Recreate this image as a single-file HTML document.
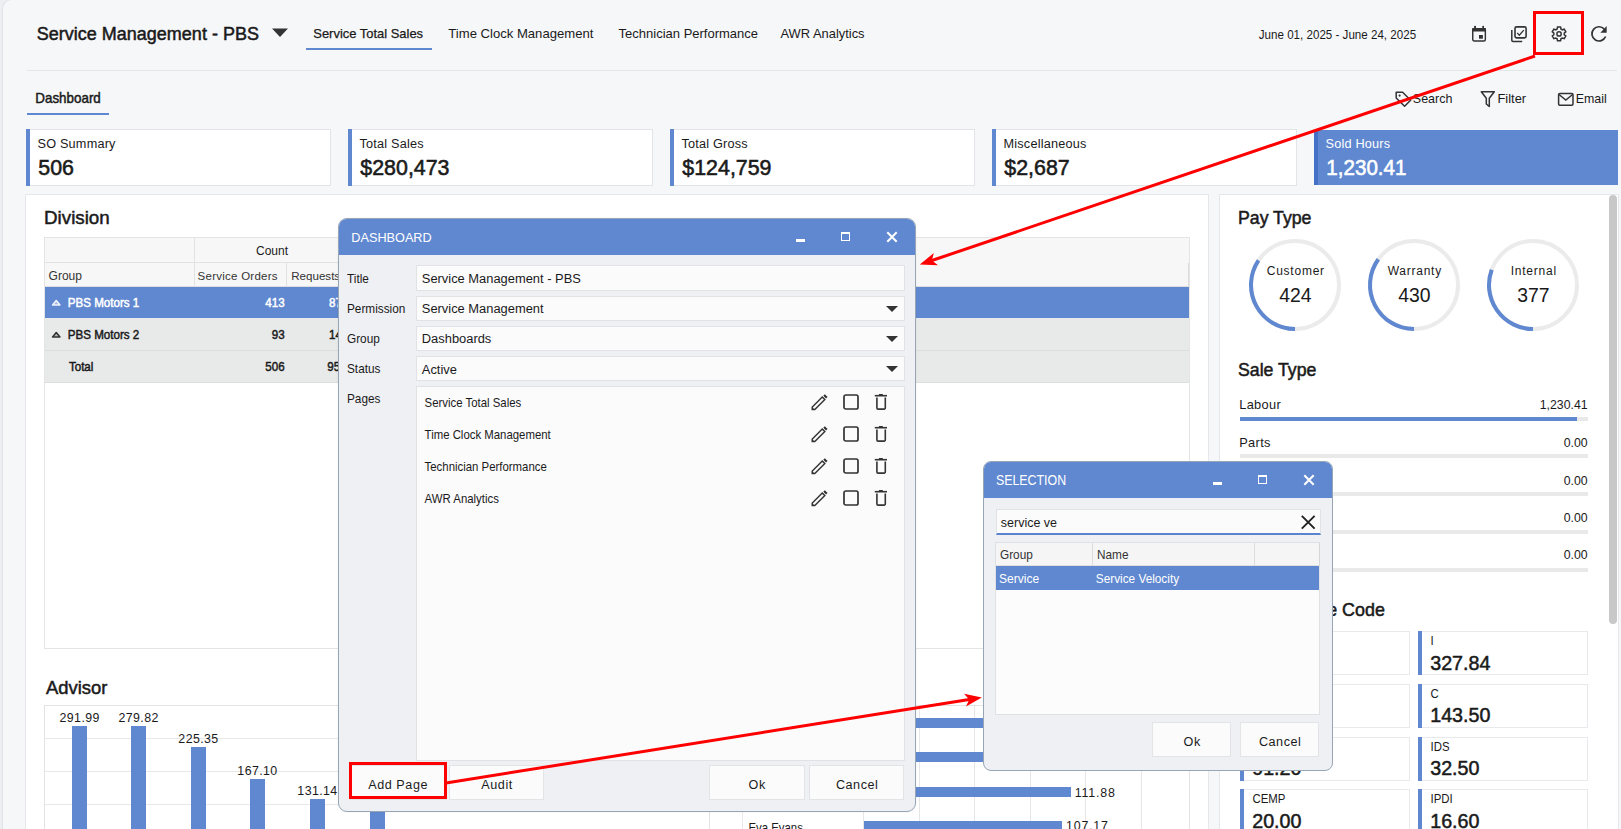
<!DOCTYPE html><html><head><meta charset="utf-8"><style>
html,body{margin:0;padding:0;width:1621px;height:829px;overflow:hidden;background:#f6f7f9}
body{position:relative;font-family:"Liberation Sans",sans-serif;color:#1a1a1a}
.r{position:absolute}
.t{position:absolute;white-space:nowrap;line-height:1}
svg.r{overflow:visible}
</style></head><body>
<div class="r" style="left:0.00px;top:0.00px;width:1621.00px;height:829.00px;background:#eceef1;"></div>
<div class="r" style="left:2.00px;top:-1.00px;width:1619.00px;height:830.00px;background:#f6f7f9;border-left:1px solid #dfe2e6;border-top:1px solid #e6e8eb;border-top-left-radius:10px;box-sizing:border-box;"></div>
<div class="t" style="left:36.80px;top:25px;font-size:18.0px;transform:scaleY(1.05);transform-origin:0 15px;-webkit-text-stroke:0.5px #1a1a1a;">Service Management - PBS</div>
<svg class="r" style="left:271px;top:28px" width="18" height="10"><polygon points="1,0.5 17,0.5 9,9" fill="#333"/></svg>
<div class="t" style="left:313.30px;top:28px;font-size:12.95px;-webkit-text-stroke:0.25px #1a1a1a;">Service Total Sales</div>
<div class="t" style="left:448.30px;top:27px;font-size:13.1px;">Time Clock Management</div>
<div class="t" style="left:618.60px;top:27px;font-size:13.0px;">Technician Performance</div>
<div class="t" style="left:780.50px;top:28px;font-size:12.9px;">AWR Analytics</div>
<div class="r" style="left:306.00px;top:48.00px;width:126.00px;height:2.00px;background:#6088d0;"></div>
<div class="r" style="left:27.00px;top:70.00px;width:1590.00px;height:1.00px;background:#e4e6e9;"></div>
<div class="t" style="left:1258.80px;top:29px;font-size:11.6px;transform:scaleY(1.06);transform-origin:0 10px;">June 01, 2025 - June 24, 2025</div>
<svg class="r" style="left:1471px;top:25px" width="17" height="18" viewBox="0 0 17 18">
<rect x="1.75" y="3.6" width="12.6" height="12.45" rx="1.5" fill="none" stroke="#333" stroke-width="1.45"/>
<rect x="1.1" y="2.9" width="13.9" height="3.7" rx="0.8" fill="#333"/>
<rect x="3.1" y="0.9" width="1.9" height="2.6" fill="#333"/><rect x="11.3" y="0.9" width="1.7" height="2.6" fill="#333"/>
<rect x="8.0" y="10.0" width="3.9" height="3.7" fill="#333"/></svg>
<svg class="r" style="left:1510px;top:25px" width="18" height="18" viewBox="0 0 18 18">
<rect x="5.0" y="1.9" width="11.1" height="11.0" rx="1.6" fill="none" stroke="#333" stroke-width="1.6"/>
<path d="M1.8 5.0 V15.3 a1.2 1.2 0 0 0 1.2 1.2 H12.2" fill="none" stroke="#333" stroke-width="1.5"/>
<path d="M7.2 7.9 L9.3 10.3 L13.8 5.1" fill="none" stroke="#333" stroke-width="1.3"/></svg>
<svg class="r" style="left:1546px;top:22px" width="26" height="24" viewBox="0 0 26 24">
<path d="M11.16 7.00 L11.50 4.97 L14.58 4.97 L14.92 7.00 L16.34 7.82 L18.27 7.10 L19.81 9.76 L18.23 11.08 L18.23 12.72 L19.81 14.04 L18.27 16.70 L16.34 15.98 L14.92 16.80 L14.58 18.83 L11.50 18.83 L11.16 16.80 L9.74 15.98 L7.81 16.70 L6.27 14.04 L7.85 12.72 L7.85 11.08 L6.27 9.76 L7.81 7.10 L9.74 7.82 Z" fill="none" stroke="#333" stroke-width="1.5" stroke-linejoin="miter"/>
<circle cx="13.04" cy="11.9" r="2.15" fill="none" stroke="#333" stroke-width="1.45"/></svg>
<svg class="r" style="left:1586px;top:22px" width="26" height="24" viewBox="0 0 26 24">
<path d="M19.61 14.53 A7.1 7.1 0 1 1 18.31 7.12" fill="none" stroke="#333" stroke-width="1.7"/>
<polygon points="20.7,4.05 20.7,10.86 14.33,10.86" fill="#333"/></svg>
<div class="t" style="left:35.30px;top:92px;font-size:13.4px;transform:scaleY(1.04);transform-origin:0 11px;-webkit-text-stroke:0.45px #1a1a1a;">Dashboard</div>
<div class="r" style="left:27.00px;top:113.00px;width:82.00px;height:2.00px;background:#6088d0;"></div>
<svg class="r" style="left:1394px;top:90px" width="19" height="18" viewBox="0 0 19 18">
<path d="M2.2 2.2 H8.6 L16.6 10.2 L10.6 16.2 L2.2 8 Z" fill="none" stroke="#333" stroke-width="1.5" stroke-linejoin="round"/>
<circle cx="5.6" cy="5.6" r="1.1" fill="#333"/></svg>
<div class="t" style="left:1412.80px;top:93px;font-size:12.5px;transform:scaleY(1.06);transform-origin:0 10px;">Search</div>
<svg class="r" style="left:1480px;top:90px" width="16" height="18" viewBox="0 0 16 18">
<path d="M1.3 1.8 H14.3 L9.3 8.3 V16.5 L6.3 14 V8.3 Z" fill="none" stroke="#333" stroke-width="1.5" stroke-linejoin="round"/></svg>
<div class="t" style="left:1497.50px;top:93px;font-size:12.9px;transform:scaleY(1.04);transform-origin:0 10px;">Filter</div>
<svg class="r" style="left:1557px;top:91.5px" width="18" height="15" viewBox="0 0 18 15">
<rect x="1.6" y="1.6" width="14.4" height="11.7" rx="1.2" fill="none" stroke="#333" stroke-width="1.5"/>
<path d="M2 2.5 L8.8 8 L15.6 2.5" fill="none" stroke="#333" stroke-width="1.5"/></svg>
<div class="t" style="left:1575.70px;top:93px;font-size:12.4px;transform:scaleY(1.08);transform-origin:0 10px;">Email</div>
<div class="r" style="left:26.00px;top:129.00px;width:305.00px;height:57.00px;background:#fff;border:1px solid #e2e4e8;box-sizing:border-box;"></div>
<div class="r" style="left:26.00px;top:129.00px;width:4.00px;height:57.00px;background:#6088d0;"></div>
<div class="t" style="left:37.50px;top:138px;font-size:12.7px;transform:scaleY(1.03);transform-origin:0 10px;letter-spacing:0.2px;">SO Summary</div>
<div class="t" style="left:38.30px;top:158px;font-size:21.4px;transform:scaleY(1.07);transform-origin:0 17px;-webkit-text-stroke:0.55px #1a1a1a;">506</div>
<div class="r" style="left:348.00px;top:129.00px;width:305.00px;height:57.00px;background:#fff;border:1px solid #e2e4e8;box-sizing:border-box;"></div>
<div class="r" style="left:348.00px;top:129.00px;width:4.00px;height:57.00px;background:#6088d0;"></div>
<div class="t" style="left:359.50px;top:138px;font-size:12.7px;transform:scaleY(1.03);transform-origin:0 10px;letter-spacing:0.2px;">Total Sales</div>
<div class="t" style="left:360.30px;top:158px;font-size:21.4px;transform:scaleY(1.07);transform-origin:0 17px;-webkit-text-stroke:0.55px #1a1a1a;">$280,473</div>
<div class="r" style="left:670.00px;top:129.00px;width:305.00px;height:57.00px;background:#fff;border:1px solid #e2e4e8;box-sizing:border-box;"></div>
<div class="r" style="left:670.00px;top:129.00px;width:4.00px;height:57.00px;background:#6088d0;"></div>
<div class="t" style="left:681.50px;top:138px;font-size:12.7px;transform:scaleY(1.03);transform-origin:0 10px;letter-spacing:0.2px;">Total Gross</div>
<div class="t" style="left:682.30px;top:158px;font-size:21.4px;transform:scaleY(1.07);transform-origin:0 17px;-webkit-text-stroke:0.55px #1a1a1a;">$124,759</div>
<div class="r" style="left:992.00px;top:129.00px;width:305.00px;height:57.00px;background:#fff;border:1px solid #e2e4e8;box-sizing:border-box;"></div>
<div class="r" style="left:992.00px;top:129.00px;width:4.00px;height:57.00px;background:#6088d0;"></div>
<div class="t" style="left:1003.50px;top:138px;font-size:12.7px;transform:scaleY(1.03);transform-origin:0 10px;letter-spacing:0.2px;">Miscellaneous</div>
<div class="t" style="left:1004.30px;top:158px;font-size:21.4px;transform:scaleY(1.07);transform-origin:0 17px;-webkit-text-stroke:0.55px #1a1a1a;">$2,687</div>
<div class="r" style="left:1314.00px;top:130.00px;width:304.00px;height:55.00px;background:#6088d0;"></div>
<div class="r" style="left:1314.00px;top:130.00px;width:4.00px;height:55.00px;background:#4470c6;"></div>
<div class="t" style="left:1325.50px;top:138px;font-size:12.7px;color:#fff;transform:scaleY(1.03);transform-origin:0 10px;letter-spacing:0.2px;">Sold Hours</div>
<div class="t" style="left:1326.30px;top:158px;font-size:20.6px;color:#fff;transform:scaleY(1.1);transform-origin:0 17px;-webkit-text-stroke:0.55px #fff;">1,230.41</div>
<div class="r" style="left:25.00px;top:194.00px;width:1184.00px;height:646.00px;background:#fff;border:1px solid #e5e7ea;box-sizing:border-box;"></div>
<div class="t" style="left:44.00px;top:209px;font-size:18.8px;transform:scaleY(1.01);transform-origin:0 15px;-webkit-text-stroke:0.5px #1a1a1a;">Division</div>
<div class="r" style="left:44.00px;top:237.00px;width:1146.00px;height:412.00px;background:#fff;border:1px solid #e4e4e4;box-sizing:border-box;"></div>
<div class="r" style="left:45.00px;top:238.00px;width:1144.00px;height:49.00px;background:#f7f7f7;"></div>
<div class="r" style="left:45.00px;top:262.00px;width:295.00px;height:1.00px;background:#e2e2e2;"></div>
<div class="r" style="left:45.00px;top:286.00px;width:1144.00px;height:1.00px;background:#dedede;"></div>
<div class="r" style="left:194.00px;top:238.00px;width:1.00px;height:49.00px;background:#e2e2e2;"></div>
<div class="r" style="left:286.00px;top:263.00px;width:1.00px;height:24.00px;background:#e2e2e2;"></div>
<div class="r" style="left:1188.00px;top:263.00px;width:1.00px;height:24.00px;background:#dcdcdc;"></div>
<div class="t" style="left:256.00px;top:245px;font-size:12.0px;">Count</div>
<div class="t" style="left:48.60px;top:270px;font-size:12.0px;color:#333;">Group</div>
<div class="t" style="left:197.60px;top:271px;font-size:11.5px;color:#333;letter-spacing:0.25px;">Service Orders</div>
<div class="t" style="left:291.20px;top:270px;font-size:11.6px;color:#333;">Requests</div>
<div class="r" style="left:45.00px;top:287.00px;width:1144.00px;height:31.00px;background:#6088d0;"></div>
<div class="r" style="left:45.00px;top:318.00px;width:1144.00px;height:64.00px;background:#e8e9e9;"></div>
<div class="r" style="left:45.00px;top:350.00px;width:1144.00px;height:1.00px;background:#dcdddd;"></div>
<div class="r" style="left:45.00px;top:382.00px;width:1144.00px;height:1.00px;background:#dedede;"></div>
<svg class="r" style="left:51px;top:299px" width="11" height="8"><polygon points="1.6,6 8.9,6 5.25,1.6" fill="#9fb6e3" stroke="#eef2fa" stroke-width="1.6" stroke-linejoin="round"/></svg>
<svg class="r" style="left:51px;top:331px" width="11" height="8"><polygon points="1.6,6 8.9,6 5.25,1.6" fill="#bbb" stroke="#333" stroke-width="1.6" stroke-linejoin="round"/></svg>
<div class="t" style="left:67.80px;top:297px;font-size:11.6px;color:#fff;transform:scaleY(1.1);transform-origin:0 10px;-webkit-text-stroke:0.45px #fff;">PBS Motors 1</div>
<div class="t" style="left:67.80px;top:329px;font-size:11.6px;transform:scaleY(1.1);transform-origin:0 10px;-webkit-text-stroke:0.45px #1a1a1a;">PBS Motors 2</div>
<div class="t" style="left:68.90px;top:361px;font-size:11.6px;transform:scaleY(1.1);transform-origin:0 10px;-webkit-text-stroke:0.45px #1a1a1a;">Total</div>
<div class="t" style="left:224.60px;width:60px;text-align:right;top:297px;font-size:11.6px;color:#fff;transform:scaleY(1.08);transform-origin:0 10px;-webkit-text-stroke:0.45px #fff;">413</div>
<div class="t" style="left:224.60px;width:60px;text-align:right;top:329px;font-size:11.6px;transform:scaleY(1.08);transform-origin:0 10px;-webkit-text-stroke:0.45px #1a1a1a;">93</div>
<div class="t" style="left:224.60px;width:60px;text-align:right;top:361px;font-size:11.6px;transform:scaleY(1.08);transform-origin:0 10px;-webkit-text-stroke:0.45px #1a1a1a;">506</div>
<div class="t" style="left:329.00px;top:297px;font-size:11.6px;color:#fff;transform:scaleY(1.08);transform-origin:0 10px;-webkit-text-stroke:0.45px #fff;">87</div>
<div class="t" style="left:329.00px;top:329px;font-size:11.6px;transform:scaleY(1.08);transform-origin:0 10px;-webkit-text-stroke:0.45px #1a1a1a;">14</div>
<div class="t" style="left:327.20px;top:361px;font-size:11.6px;transform:scaleY(1.08);transform-origin:0 10px;-webkit-text-stroke:0.45px #1a1a1a;">95</div>
<div class="t" style="left:46.00px;top:679px;font-size:18.4px;-webkit-text-stroke:0.5px #1a1a1a;">Advisor</div>
<div class="r" style="left:44.00px;top:705.00px;width:666.00px;height:1.00px;background:#e3e3e3;"></div>
<div class="r" style="left:44.00px;top:705.00px;width:1.00px;height:135.00px;background:#e3e3e3;"></div>
<div class="r" style="left:45.00px;top:738.00px;width:665.00px;height:1.00px;background:#e8e8e8;"></div>
<div class="r" style="left:45.00px;top:771.00px;width:665.00px;height:1.00px;background:#e8e8e8;"></div>
<div class="r" style="left:45.00px;top:804.00px;width:665.00px;height:1.00px;background:#e8e8e8;"></div>
<div class="r" style="left:72.00px;top:726.00px;width:15.00px;height:114.00px;background:#6088d0;"></div>
<div class="t" style="left:39.70px;width:80px;text-align:center;top:712px;font-size:12.4px;transform:scaleY(1.05);transform-origin:0 10px;letter-spacing:0.4px;">291.99</div>
<div class="r" style="left:131.00px;top:726.00px;width:15.00px;height:114.00px;background:#6088d0;"></div>
<div class="t" style="left:98.60px;width:80px;text-align:center;top:712px;font-size:12.4px;transform:scaleY(1.05);transform-origin:0 10px;letter-spacing:0.4px;">279.82</div>
<div class="r" style="left:191.00px;top:747.00px;width:15.00px;height:93.00px;background:#6088d0;"></div>
<div class="t" style="left:158.50px;width:80px;text-align:center;top:733px;font-size:12.4px;transform:scaleY(1.05);transform-origin:0 10px;letter-spacing:0.4px;">225.35</div>
<div class="r" style="left:250.00px;top:779.00px;width:15.00px;height:61.00px;background:#6088d0;"></div>
<div class="t" style="left:217.50px;width:80px;text-align:center;top:765px;font-size:12.4px;transform:scaleY(1.05);transform-origin:0 10px;letter-spacing:0.4px;">167.10</div>
<div class="r" style="left:310.00px;top:799.00px;width:15.00px;height:41.00px;background:#6088d0;"></div>
<div class="t" style="left:277.50px;width:80px;text-align:center;top:785px;font-size:12.4px;transform:scaleY(1.05);transform-origin:0 10px;letter-spacing:0.4px;">131.14</div>
<div class="r" style="left:370.00px;top:790.00px;width:15.00px;height:50.00px;background:#6088d0;"></div>
<div class="r" style="left:710.00px;top:705.00px;width:480.00px;height:1.00px;background:#e3e3e3;"></div>
<div class="r" style="left:709.00px;top:705.00px;width:1.00px;height:135.00px;background:#e3e3e3;"></div>
<div class="r" style="left:742.00px;top:705.00px;width:1.00px;height:135.00px;background:#e8e8e8;"></div>
<div class="r" style="left:863.00px;top:706.00px;width:1.00px;height:134.00px;background:#e6e6e6;"></div>
<div class="r" style="left:919.00px;top:706.00px;width:1.00px;height:134.00px;background:#e6e6e6;"></div>
<div class="r" style="left:974.00px;top:706.00px;width:1.00px;height:134.00px;background:#e6e6e6;"></div>
<div class="r" style="left:1030.00px;top:706.00px;width:1.00px;height:134.00px;background:#e6e6e6;"></div>
<div class="r" style="left:1085.00px;top:706.00px;width:1.00px;height:134.00px;background:#e6e6e6;"></div>
<div class="r" style="left:1141.00px;top:706.00px;width:1.00px;height:134.00px;background:#e6e6e6;"></div>
<div class="r" style="left:1189.00px;top:705.00px;width:1.00px;height:135.00px;background:#e3e3e3;"></div>
<div class="r" style="left:864.00px;top:718.00px;width:336.00px;height:10.00px;background:#6088d0;"></div>
<div class="r" style="left:864.00px;top:752.00px;width:336.00px;height:10.00px;background:#6088d0;"></div>
<div class="r" style="left:864.00px;top:787.00px;width:207.00px;height:10.00px;background:#6088d0;"></div>
<div class="t" style="left:1074.80px;top:787px;font-size:12.4px;transform:scaleY(1.05);transform-origin:0 10px;letter-spacing:0.8px;">111.88</div>
<div class="r" style="left:864.00px;top:821.00px;width:198.00px;height:9.00px;background:#6088d0;"></div>
<div class="t" style="left:1066.00px;top:820px;font-size:12.4px;transform:scaleY(1.05);transform-origin:0 10px;letter-spacing:0.8px;">107.17</div>
<div class="t" style="left:748.40px;top:823px;font-size:11.4px;transform:scaleY(1.12);transform-origin:0 9px;">Eva Evans</div>
<div class="r" style="left:1219.00px;top:194.00px;width:400.00px;height:646.00px;background:#fff;border:1px solid #e5e7ea;box-sizing:border-box;"></div>
<div class="r" style="left:1609.00px;top:195.00px;width:8.00px;height:429.00px;background:#c8c8c8;border-radius:4px;"></div>
<div class="t" style="left:1238.00px;top:210px;font-size:17.7px;transform:scaleY(1.03);transform-origin:0 14px;-webkit-text-stroke:0.5px #1a1a1a;">Pay Type</div>
<svg class="r" style="left:1245px;top:235px" width="100" height="100" viewBox="1245 235 100 100">
<circle cx="1295" cy="285" r="44" fill="none" stroke="#ebebeb" stroke-width="4"/>
<path d="M1295.00 329.00 A44 44 0 0 1 1258.52 260.40" fill="none" stroke="#6088d0" stroke-width="4"/></svg>
<div class="t" style="left:1250.80px;width:90px;text-align:center;top:265px;font-size:12.0px;letter-spacing:0.75px;">Customer</div>
<div class="t" style="left:1250.40px;width:90px;text-align:center;top:286px;font-size:19.4px;transform:scaleY(1.07);transform-origin:0 16px;">424</div>
<svg class="r" style="left:1364px;top:235px" width="100" height="100" viewBox="1364 235 100 100">
<circle cx="1414" cy="285" r="44" fill="none" stroke="#ebebeb" stroke-width="4"/>
<path d="M1414.00 329.00 A44 44 0 0 1 1378.29 259.29" fill="none" stroke="#6088d0" stroke-width="4"/></svg>
<div class="t" style="left:1369.80px;width:90px;text-align:center;top:265px;font-size:12.0px;letter-spacing:0.75px;">Warranty</div>
<div class="t" style="left:1369.40px;width:90px;text-align:center;top:286px;font-size:19.4px;transform:scaleY(1.07);transform-origin:0 16px;">430</div>
<svg class="r" style="left:1483px;top:235px" width="100" height="100" viewBox="1483 235 100 100">
<circle cx="1533" cy="285" r="44" fill="none" stroke="#ebebeb" stroke-width="4"/>
<path d="M1533.00 329.00 A44 44 0 0 1 1491.72 269.77" fill="none" stroke="#6088d0" stroke-width="4"/></svg>
<div class="t" style="left:1488.80px;width:90px;text-align:center;top:265px;font-size:12.0px;letter-spacing:0.75px;">Internal</div>
<div class="t" style="left:1488.40px;width:90px;text-align:center;top:286px;font-size:19.4px;transform:scaleY(1.07);transform-origin:0 16px;">377</div>
<div class="t" style="left:1238.00px;top:362px;font-size:17.7px;transform:scaleY(1.02);transform-origin:0 14px;-webkit-text-stroke:0.5px #1a1a1a;">Sale Type</div>
<div class="t" style="left:1239.20px;top:399px;font-size:12.8px;transform:scaleY(1.03);transform-origin:0 10px;letter-spacing:0.35px;">Labour</div>
<div class="t" style="left:1487.60px;width:100px;text-align:right;top:399px;font-size:12.3px;transform:scaleY(1.05);transform-origin:0 10px;">1,230.41</div>
<div class="r" style="left:1240.00px;top:417.00px;width:348.00px;height:4.00px;background:#e9e9e9;"></div>
<div class="r" style="left:1240.00px;top:417.00px;width:337.00px;height:4.00px;background:#6088d0;"></div>
<div class="t" style="left:1239.20px;top:437px;font-size:12.8px;transform:scaleY(1.03);transform-origin:0 10px;letter-spacing:0.35px;">Parts</div>
<div class="t" style="left:1487.60px;width:100px;text-align:right;top:437px;font-size:12.3px;transform:scaleY(1.05);transform-origin:0 10px;">0.00</div>
<div class="r" style="left:1240.00px;top:454.00px;width:348.00px;height:4.00px;background:#e9e9e9;"></div>
<div class="t" style="left:1239.20px;top:475px;font-size:12.8px;transform:scaleY(1.03);transform-origin:0 10px;letter-spacing:0.35px;">Sublet</div>
<div class="t" style="left:1487.60px;width:100px;text-align:right;top:475px;font-size:12.3px;transform:scaleY(1.05);transform-origin:0 10px;">0.00</div>
<div class="r" style="left:1240.00px;top:492.00px;width:348.00px;height:4.00px;background:#e9e9e9;"></div>
<div class="t" style="left:1239.20px;top:512px;font-size:12.8px;transform:scaleY(1.03);transform-origin:0 10px;letter-spacing:0.35px;">Misc</div>
<div class="t" style="left:1487.60px;width:100px;text-align:right;top:512px;font-size:12.3px;transform:scaleY(1.05);transform-origin:0 10px;">0.00</div>
<div class="r" style="left:1240.00px;top:530.00px;width:348.00px;height:4.00px;background:#e9e9e9;"></div>
<div class="t" style="left:1239.20px;top:549px;font-size:12.8px;transform:scaleY(1.03);transform-origin:0 10px;letter-spacing:0.35px;">Other</div>
<div class="t" style="left:1487.60px;width:100px;text-align:right;top:549px;font-size:12.3px;transform:scaleY(1.05);transform-origin:0 10px;">0.00</div>
<div class="r" style="left:1240.00px;top:568.00px;width:348.00px;height:4.00px;background:#e9e9e9;"></div>
<div class="t" style="left:1238.00px;top:602px;font-size:17.9px;transform:scaleY(1.02);transform-origin:0 14px;-webkit-text-stroke:0.5px #1a1a1a;">Labour Type Code</div>
<div class="r" style="left:1240.00px;top:631.00px;width:170.00px;height:44.00px;background:#fff;border:1px solid #e8e9ec;box-sizing:border-box;"></div>
<div class="r" style="left:1240.00px;top:631.00px;width:4.00px;height:44.00px;background:#6088d0;"></div>
<div class="t" style="left:1252.50px;top:636px;font-size:11.4px;transform:scaleY(1.08);transform-origin:0 9px;">W</div>
<div class="t" style="left:1252.20px;top:654px;font-size:19.7px;-webkit-text-stroke:0.5px #1a1a1a;">81.50</div>
<div class="r" style="left:1418.00px;top:631.00px;width:170.00px;height:44.00px;background:#fff;border:1px solid #e8e9ec;box-sizing:border-box;"></div>
<div class="r" style="left:1418.00px;top:631.00px;width:4.00px;height:44.00px;background:#6088d0;"></div>
<div class="t" style="left:1430.50px;top:636px;font-size:11.4px;transform:scaleY(1.08);transform-origin:0 9px;">I</div>
<div class="t" style="left:1430.20px;top:654px;font-size:19.7px;-webkit-text-stroke:0.5px #1a1a1a;">327.84</div>
<div class="r" style="left:1240.00px;top:684.00px;width:170.00px;height:44.00px;background:#fff;border:1px solid #e8e9ec;box-sizing:border-box;"></div>
<div class="r" style="left:1240.00px;top:684.00px;width:4.00px;height:44.00px;background:#6088d0;"></div>
<div class="t" style="left:1252.50px;top:689px;font-size:11.4px;transform:scaleY(1.08);transform-origin:0 9px;">CP</div>
<div class="t" style="left:1252.20px;top:706px;font-size:19.7px;-webkit-text-stroke:0.5px #1a1a1a;">60.25</div>
<div class="r" style="left:1418.00px;top:684.00px;width:170.00px;height:44.00px;background:#fff;border:1px solid #e8e9ec;box-sizing:border-box;"></div>
<div class="r" style="left:1418.00px;top:684.00px;width:4.00px;height:44.00px;background:#6088d0;"></div>
<div class="t" style="left:1430.50px;top:689px;font-size:11.4px;transform:scaleY(1.08);transform-origin:0 9px;">C</div>
<div class="t" style="left:1430.20px;top:706px;font-size:19.7px;-webkit-text-stroke:0.5px #1a1a1a;">143.50</div>
<div class="r" style="left:1240.00px;top:737.00px;width:170.00px;height:44.00px;background:#fff;border:1px solid #e8e9ec;box-sizing:border-box;"></div>
<div class="r" style="left:1240.00px;top:737.00px;width:4.00px;height:44.00px;background:#6088d0;"></div>
<div class="t" style="left:1252.50px;top:742px;font-size:11.4px;transform:scaleY(1.08);transform-origin:0 9px;">W2</div>
<div class="t" style="left:1252.20px;top:759px;font-size:19.7px;-webkit-text-stroke:0.5px #1a1a1a;">91.20</div>
<div class="r" style="left:1418.00px;top:737.00px;width:170.00px;height:44.00px;background:#fff;border:1px solid #e8e9ec;box-sizing:border-box;"></div>
<div class="r" style="left:1418.00px;top:737.00px;width:4.00px;height:44.00px;background:#6088d0;"></div>
<div class="t" style="left:1430.50px;top:742px;font-size:11.4px;transform:scaleY(1.08);transform-origin:0 9px;">IDS</div>
<div class="t" style="left:1430.20px;top:759px;font-size:19.7px;-webkit-text-stroke:0.5px #1a1a1a;">32.50</div>
<div class="r" style="left:1240.00px;top:789.00px;width:170.00px;height:44.00px;background:#fff;border:1px solid #e8e9ec;box-sizing:border-box;"></div>
<div class="r" style="left:1240.00px;top:789.00px;width:4.00px;height:44.00px;background:#6088d0;"></div>
<div class="t" style="left:1252.50px;top:794px;font-size:11.4px;transform:scaleY(1.08);transform-origin:0 9px;">CEMP</div>
<div class="t" style="left:1252.20px;top:812px;font-size:19.7px;-webkit-text-stroke:0.5px #1a1a1a;">20.00</div>
<div class="r" style="left:1418.00px;top:789.00px;width:170.00px;height:44.00px;background:#fff;border:1px solid #e8e9ec;box-sizing:border-box;"></div>
<div class="r" style="left:1418.00px;top:789.00px;width:4.00px;height:44.00px;background:#6088d0;"></div>
<div class="t" style="left:1430.50px;top:794px;font-size:11.4px;transform:scaleY(1.08);transform-origin:0 9px;">IPDI</div>
<div class="t" style="left:1430.20px;top:812px;font-size:19.7px;-webkit-text-stroke:0.5px #1a1a1a;">16.60</div>
<div class="r" style="left:338px;top:218px;width:578px;height:594px;background:#eff0f4;border:1px solid #97a6b6;border-radius:9px;box-sizing:border-box;overflow:hidden;box-shadow:0 0 2px rgba(0,0,0,0.08)"><div style="position:absolute;left:0;top:0;right:0;height:36px;background:#6088d0"></div></div>
<div class="t" style="left:351.30px;top:232px;font-size:12.7px;color:#fff;transform:scaleY(1.07);transform-origin:0 10px;">DASHBOARD</div>
<div class="r" style="left:795.8px;top:238.8px;width:9.3px;height:3.4px;background:#fff"></div>
<div class="r" style="left:841px;top:231.9px;width:9.2px;height:9.3px;border:1.2px solid #fff;border-top-width:2.6px;box-sizing:border-box"></div>
<svg class="r" style="left:886px;top:231px" width="12" height="12" viewBox="0 0 12 12"><path d="M1.3 1.3 L10.7 10.7 M10.7 1.3 L1.3 10.7" stroke="#fff" stroke-width="2"/></svg>
<div class="t" style="left:347.00px;top:274px;font-size:11.8px;transform:scaleY(1.13);transform-origin:0 9px;">Title</div>
<div class="t" style="left:347.00px;top:304px;font-size:11.8px;transform:scaleY(1.13);transform-origin:0 9px;">Permission</div>
<div class="t" style="left:347.00px;top:334px;font-size:11.8px;transform:scaleY(1.13);transform-origin:0 9px;">Group</div>
<div class="t" style="left:347.00px;top:364px;font-size:11.8px;transform:scaleY(1.13);transform-origin:0 9px;">Status</div>
<div class="t" style="left:347.00px;top:394px;font-size:11.8px;transform:scaleY(1.13);transform-origin:0 9px;">Pages</div>
<div class="r" style="left:416.00px;top:265.00px;width:489.00px;height:26.00px;background:#fbfbfc;border:1px solid #e0e2e6;box-sizing:border-box;"></div>
<div class="t" style="left:421.80px;top:273px;font-size:12.9px;transform:scaleY(1.06);transform-origin:0 10px;">Service Management - PBS</div>
<div class="r" style="left:416.00px;top:296.00px;width:489.00px;height:25.00px;background:#fbfbfc;border:1px solid #e0e2e6;box-sizing:border-box;"></div>
<div class="t" style="left:421.80px;top:303px;font-size:12.9px;transform:scaleY(1.06);transform-origin:0 10px;">Service Management</div>
<svg class="r" style="left:884.7px;top:304.55px" width="14" height="8"><polygon points="1,1 13,1 7,7" fill="#333"/></svg>
<div class="r" style="left:416.00px;top:326.00px;width:489.00px;height:25.00px;background:#fbfbfc;border:1px solid #e0e2e6;box-sizing:border-box;"></div>
<div class="t" style="left:421.80px;top:333px;font-size:12.9px;transform:scaleY(1.06);transform-origin:0 10px;">Dashboards</div>
<svg class="r" style="left:884.7px;top:334.70px" width="14" height="8"><polygon points="1,1 13,1 7,7" fill="#333"/></svg>
<div class="r" style="left:416.00px;top:356.00px;width:489.00px;height:25.00px;background:#fbfbfc;border:1px solid #e0e2e6;box-sizing:border-box;"></div>
<div class="t" style="left:421.80px;top:364px;font-size:12.9px;transform:scaleY(1.06);transform-origin:0 10px;">Active</div>
<svg class="r" style="left:884.7px;top:364.85px" width="14" height="8"><polygon points="1,1 13,1 7,7" fill="#333"/></svg>
<div class="r" style="left:416.00px;top:386.00px;width:489.00px;height:375.00px;background:#fbfbfc;border:1px solid #e0e2e6;box-sizing:border-box;"></div>
<div class="t" style="left:424.60px;top:398px;font-size:11.4px;transform:scaleY(1.08);transform-origin:0 9px;">Service Total Sales</div>
<svg class="r" style="left:808px;top:390.0px" width="24" height="24" viewBox="0 0 24 24">
<polygon points="4.3,19.5 4.3,17.0 14.26,7.0 16.8,9.54 6.8,19.5" fill="none" stroke="#333" stroke-width="1.45" stroke-linejoin="miter"/>
<polygon points="3.9,19.9 3.9,16.8 7.0,19.9" fill="#333"/>
<polygon points="19.56,6.92 18.0,8.48 15.32,5.8 16.88,4.24" fill="#333"/></svg>
<svg class="r" style="left:843px;top:393.9px" width="16" height="16" viewBox="0 0 16 16"><rect x="1.0" y="1.0" width="14.0" height="14.0" rx="1.8" fill="none" stroke="#333" stroke-width="1.7"/></svg>
<svg class="r" style="left:874px;top:390.0px" width="16" height="24" viewBox="0 0 16 24">
<rect x="0.8" y="4.9" width="12.2" height="1.6" fill="#333"/><rect x="4.9" y="4.0" width="4.0" height="1.2" rx="0.5" fill="#333"/>
<path d="M2.9 7.4 V17.9 a1.2 1.2 0 0 0 1.2 1.2 H10.1 a1.2 1.2 0 0 0 1.2 -1.2 V7.4" fill="none" stroke="#333" stroke-width="1.6"/></svg>
<div class="t" style="left:424.60px;top:430px;font-size:11.4px;transform:scaleY(1.08);transform-origin:0 9px;">Time Clock Management</div>
<svg class="r" style="left:808px;top:422.0px" width="24" height="24" viewBox="0 0 24 24">
<polygon points="4.3,19.5 4.3,17.0 14.26,7.0 16.8,9.54 6.8,19.5" fill="none" stroke="#333" stroke-width="1.45" stroke-linejoin="miter"/>
<polygon points="3.9,19.9 3.9,16.8 7.0,19.9" fill="#333"/>
<polygon points="19.56,6.92 18.0,8.48 15.32,5.8 16.88,4.24" fill="#333"/></svg>
<svg class="r" style="left:843px;top:425.9px" width="16" height="16" viewBox="0 0 16 16"><rect x="1.0" y="1.0" width="14.0" height="14.0" rx="1.8" fill="none" stroke="#333" stroke-width="1.7"/></svg>
<svg class="r" style="left:874px;top:422.0px" width="16" height="24" viewBox="0 0 16 24">
<rect x="0.8" y="4.9" width="12.2" height="1.6" fill="#333"/><rect x="4.9" y="4.0" width="4.0" height="1.2" rx="0.5" fill="#333"/>
<path d="M2.9 7.4 V17.9 a1.2 1.2 0 0 0 1.2 1.2 H10.1 a1.2 1.2 0 0 0 1.2 -1.2 V7.4" fill="none" stroke="#333" stroke-width="1.6"/></svg>
<div class="t" style="left:424.60px;top:462px;font-size:11.4px;transform:scaleY(1.08);transform-origin:0 9px;">Technician Performance</div>
<svg class="r" style="left:808px;top:454.0px" width="24" height="24" viewBox="0 0 24 24">
<polygon points="4.3,19.5 4.3,17.0 14.26,7.0 16.8,9.54 6.8,19.5" fill="none" stroke="#333" stroke-width="1.45" stroke-linejoin="miter"/>
<polygon points="3.9,19.9 3.9,16.8 7.0,19.9" fill="#333"/>
<polygon points="19.56,6.92 18.0,8.48 15.32,5.8 16.88,4.24" fill="#333"/></svg>
<svg class="r" style="left:843px;top:457.9px" width="16" height="16" viewBox="0 0 16 16"><rect x="1.0" y="1.0" width="14.0" height="14.0" rx="1.8" fill="none" stroke="#333" stroke-width="1.7"/></svg>
<svg class="r" style="left:874px;top:454.0px" width="16" height="24" viewBox="0 0 16 24">
<rect x="0.8" y="4.9" width="12.2" height="1.6" fill="#333"/><rect x="4.9" y="4.0" width="4.0" height="1.2" rx="0.5" fill="#333"/>
<path d="M2.9 7.4 V17.9 a1.2 1.2 0 0 0 1.2 1.2 H10.1 a1.2 1.2 0 0 0 1.2 -1.2 V7.4" fill="none" stroke="#333" stroke-width="1.6"/></svg>
<div class="t" style="left:424.60px;top:494px;font-size:11.4px;transform:scaleY(1.08);transform-origin:0 9px;">AWR Analytics</div>
<svg class="r" style="left:808px;top:486.0px" width="24" height="24" viewBox="0 0 24 24">
<polygon points="4.3,19.5 4.3,17.0 14.26,7.0 16.8,9.54 6.8,19.5" fill="none" stroke="#333" stroke-width="1.45" stroke-linejoin="miter"/>
<polygon points="3.9,19.9 3.9,16.8 7.0,19.9" fill="#333"/>
<polygon points="19.56,6.92 18.0,8.48 15.32,5.8 16.88,4.24" fill="#333"/></svg>
<svg class="r" style="left:843px;top:489.9px" width="16" height="16" viewBox="0 0 16 16"><rect x="1.0" y="1.0" width="14.0" height="14.0" rx="1.8" fill="none" stroke="#333" stroke-width="1.7"/></svg>
<svg class="r" style="left:874px;top:486.0px" width="16" height="24" viewBox="0 0 16 24">
<rect x="0.8" y="4.9" width="12.2" height="1.6" fill="#333"/><rect x="4.9" y="4.0" width="4.0" height="1.2" rx="0.5" fill="#333"/>
<path d="M2.9 7.4 V17.9 a1.2 1.2 0 0 0 1.2 1.2 H10.1 a1.2 1.2 0 0 0 1.2 -1.2 V7.4" fill="none" stroke="#333" stroke-width="1.6"/></svg>
<div class="r" style="left:349.00px;top:765.00px;width:98.00px;height:35.00px;background:#fbfbfc;border:1px solid #e2e4e8;box-sizing:border-box;"></div>
<div class="t" style="left:353.15px;width:90px;text-align:center;top:779px;font-size:12.6px;transform:scaleY(1.05);transform-origin:0 10px;letter-spacing:0.55px;">Add Page</div>
<div class="r" style="left:449.00px;top:765.00px;width:95.00px;height:35.00px;background:#fbfbfc;border:1px solid #e2e4e8;box-sizing:border-box;"></div>
<div class="t" style="left:452.10px;width:90px;text-align:center;top:779px;font-size:12.6px;transform:scaleY(1.05);transform-origin:0 10px;letter-spacing:0.55px;">Audit</div>
<div class="r" style="left:709.00px;top:765.00px;width:96.00px;height:35.00px;background:#fbfbfc;border:1px solid #e2e4e8;box-sizing:border-box;"></div>
<div class="t" style="left:712.15px;width:90px;text-align:center;top:779px;font-size:12.6px;transform:scaleY(1.05);transform-origin:0 10px;letter-spacing:0.55px;">Ok</div>
<div class="r" style="left:809.00px;top:765.00px;width:95.00px;height:35.00px;background:#fbfbfc;border:1px solid #e2e4e8;box-sizing:border-box;"></div>
<div class="t" style="left:812.15px;width:90px;text-align:center;top:779px;font-size:12.6px;transform:scaleY(1.05);transform-origin:0 10px;letter-spacing:0.55px;">Cancel</div>
<div class="r" style="left:983px;top:461px;width:350px;height:310px;background:#eff0f4;border:1px solid #97a6b6;border-radius:8px;box-sizing:border-box;overflow:hidden"><div style="position:absolute;left:0;top:0;right:0;height:36px;background:#6088d0"></div></div>
<div class="t" style="left:995.90px;top:475px;font-size:12.4px;color:#fff;transform:scaleY(1.12);transform-origin:0 10px;">SELECTION</div>
<div class="r" style="left:1213px;top:481.6px;width:8.7px;height:3.6px;background:#fff"></div>
<div class="r" style="left:1257.6px;top:475.1px;width:9.6px;height:8.8px;border:1.2px solid #fff;border-top-width:2.6px;box-sizing:border-box"></div>
<svg class="r" style="left:1303px;top:474px" width="12" height="12" viewBox="0 0 12 12"><path d="M1.3 1.3 L10.7 10.7 M10.7 1.3 L1.3 10.7" stroke="#fff" stroke-width="2"/></svg>
<div class="r" style="left:996.00px;top:509.00px;width:325.00px;height:26.00px;background:#fbfbfc;border:1px solid #e0e2e6;border-bottom:2px solid #5b84cf;box-sizing:border-box;"></div>
<div class="t" style="left:1000.80px;top:517px;font-size:12.5px;transform:scaleY(1.06);transform-origin:0 10px;">service ve</div>
<svg class="r" style="left:1300px;top:514px" width="16" height="16" viewBox="0 0 16 16"><path d="M1.8 1.8 L14.6 14.6 M14.6 1.8 L1.8 14.6" stroke="#222" stroke-width="1.9"/></svg>
<div class="r" style="left:995.00px;top:542.00px;width:325.00px;height:173.00px;background:#fcfcfd;border:1px solid #dfe1e5;box-sizing:border-box;"></div>
<div class="r" style="left:996.00px;top:543.00px;width:323.00px;height:23.00px;background:#f5f5f5;"></div>
<div class="r" style="left:996.00px;top:565.00px;width:323.00px;height:1.00px;background:#e0e0e0;"></div>
<div class="r" style="left:1092.00px;top:543.00px;width:1.00px;height:23.00px;background:#dcdcdc;"></div>
<div class="r" style="left:1254.00px;top:543.00px;width:1.00px;height:23.00px;background:#dcdcdc;"></div>
<div class="r" style="left:1319.00px;top:543.00px;width:1.00px;height:23.00px;background:#d6d6d6;"></div>
<div class="t" style="left:1000.00px;top:550px;font-size:11.8px;color:#333;transform:scaleY(1.05);transform-origin:0 9px;">Group</div>
<div class="t" style="left:1097.00px;top:550px;font-size:11.8px;color:#333;transform:scaleY(1.05);transform-origin:0 9px;">Name</div>
<div class="r" style="left:996.00px;top:566.00px;width:323.00px;height:24.00px;background:#6088d0;"></div>
<div class="t" style="left:999.10px;top:573px;font-size:12.0px;color:#fff;transform:scaleY(1.05);transform-origin:0 10px;">Service</div>
<div class="t" style="left:1095.80px;top:574px;font-size:11.8px;color:#fff;transform:scaleY(1.05);transform-origin:0 9px;">Service Velocity</div>
<div class="r" style="left:1152.00px;top:722.00px;width:79.00px;height:35.00px;background:#fbfbfc;border:1px solid #e2e4e8;box-sizing:border-box;"></div>
<div class="t" style="left:1153.15px;width:78px;text-align:center;top:736px;font-size:12.6px;transform:scaleY(1.05);transform-origin:0 10px;letter-spacing:0.55px;">Ok</div>
<div class="r" style="left:1240.00px;top:722.00px;width:79.00px;height:35.00px;background:#fbfbfc;border:1px solid #e2e4e8;box-sizing:border-box;"></div>
<div class="t" style="left:1241.20px;width:78px;text-align:center;top:736px;font-size:12.6px;transform:scaleY(1.05);transform-origin:0 10px;letter-spacing:0.55px;">Cancel</div>
<div class="r" style="left:1533.00px;top:11.00px;width:51.00px;height:44.00px;border:3px solid #ff0000;box-sizing:border-box;"></div>
<div class="r" style="left:349.00px;top:762.00px;width:98.00px;height:37.00px;border:3px solid #ff0000;box-sizing:border-box;"></div>
<svg class="r" style="left:0;top:0" width="1621" height="829"><line x1="1535.0" y1="56.0" x2="931.9" y2="260.5" stroke="#ff0000" stroke-width="3"/><polygon points="919.8,264.6 933.8,253.0 931.9,260.5 938.0,265.3" fill="#ff0000"/><line x1="446.0" y1="783.0" x2="969.2" y2="699.4" stroke="#ff0000" stroke-width="3"/><polygon points="981.8,697.4 966.0,706.5 969.2,699.4 964.0,693.7" fill="#ff0000"/></svg>
</body></html>
